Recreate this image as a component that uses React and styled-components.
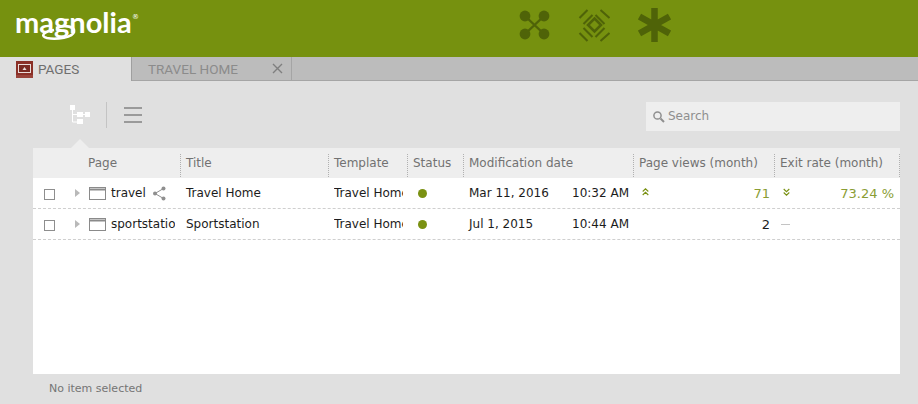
import React from 'react';
import styled, { createGlobalStyle } from 'styled-components';

const GlobalStyle = createGlobalStyle`
  html, body { margin: 0; padding: 0; height: 100%; }
  body { background: #e0e0e0; font-family: "DejaVu Sans", Verdana, sans-serif; overflow: hidden; }
`;

const COLUMNS = '148px 148px 79px 56px 170px 141px 125px';
const GREEN = '#7a9112';
const SOFT_GREEN = '#8a9d34';

const Page = styled.div`
  width: 918px;
  height: 404px;
  display: flex;
  flex-direction: column;
  background: #e0e0e0;
`;

const Header = styled.header`
  height: 57px;
  background: #76910f;
  display: flex;
  flex-shrink: 0;
`;

const Logo = styled.div`
  position: relative;
  width: 122px;
  height: 30px;
  margin: 7px 0 0 15px;
  flex-shrink: 0;
`;

const LogoText = styled.span`
  display: block;
  font-family: "Lato", sans-serif;
  font-weight: 700;
  font-size: 29px;
  line-height: 30px;
  color: #fff;
`;

const LogoSwoosh = styled.svg`
  position: absolute;
  left: 24px;
  top: 16px;
`;

const Mark = styled.span`
  position: absolute;
  left: 117px;
  top: 6px;
  font-size: 7px;
  line-height: 8px;
  color: #fff;
`;

const AppIcons = styled.nav`
  display: flex;
  align-items: center;
  margin-left: 381px;
  gap: 27px;
  height: 50px;
`;

const TabBar = styled.div`
  height: 24px;
  display: flex;
  background: #bcbcbc;
  flex-shrink: 0;
`;

const ActiveTab = styled.div`
  width: 132px;
  background: #e0e0e0;
  display: flex;
  align-items: center;
  padding-left: 16px;
  box-sizing: border-box;
  gap: 5px;
  border-right: 1px solid #9f9f9f;
  font-family: "Roboto", sans-serif;
  font-size: 13.5px;
  color: #6f6f6f;
`;

const Tab = styled.div`
  width: 160px;
  box-sizing: border-box;
  display: flex;
  align-items: center;
  justify-content: space-between;
  padding: 0 8px 0 16px;
  border-right: 1px solid #a5a5a5;
  border-bottom: 1px solid #a5a5a5;
  font-family: "Roboto", sans-serif;
  font-size: 13.5px;
  color: #8b8b8b;
`;

const TabRest = styled.div`
  flex: 1;
  border-bottom: 1px solid #a5a5a5;
`;

const Toolbar = styled.div`
  height: 67px;
  box-sizing: border-box;
  display: flex;
  align-items: flex-start;
  padding: 21px 18px 0 33px;
  flex-shrink: 0;
`;

const ViewSwitch = styled.div`
  position: relative;
  display: flex;
  align-items: center;
  height: 26px;
  padding-left: 37px;
`;

const Divider = styled.span`
  width: 1px;
  height: 26px;
  background: #c4c4c4;
  margin: 0 17px 0 15px;
`;

const Pointer = styled.span`
  position: absolute;
  left: 38px;
  top: 37px;
  border-left: 9px solid transparent;
  border-right: 9px solid transparent;
  border-bottom: 9px solid #eeeeee;
`;

const Search = styled.div`
  margin-left: auto;
  width: 254px;
  height: 29px;
  background: #eeeeee;
  display: flex;
  align-items: center;
  padding: 0 0 1px 5px;
  box-sizing: border-box;
  gap: 1px;
  font-size: 12px;
  color: #8f8f8f;
`;

const Table = styled.div`
  margin: 0 18px 0 33px;
  height: 226px;
  background: #fff;
  flex-shrink: 0;
`;

const HeaderRow = styled.div`
  display: grid;
  grid-template-columns: ${COLUMNS};
  height: 30px;
  background: #eeeeee;
`;

const HeaderCell = styled.div`
  box-sizing: border-box;
  padding-left: ${({ $pad }) => $pad}px;
  margin-top: 6px;
  height: 23px;
  line-height: 18px;
  font-size: 12px;
  color: #727272;
  white-space: nowrap;
  border-right: 1px dotted #b0b0b0;
`;

const Row = styled.div`
  display: grid;
  grid-template-columns: ${COLUMNS};
  height: 31px;
  box-sizing: border-box;
  border-bottom: 1px dashed #cfcfcf;
  font-size: 12px;
  color: #1c1c1c;
`;

const Cell = styled.div`
  display: flex;
  align-items: center;
  box-sizing: border-box;
  padding: 0 ${({ $right }) => $right ?? 0}px 0 5px;
  overflow: hidden;
  white-space: nowrap;
  min-width: 0;
`;

const PageCell = styled.div`
  display: flex;
  align-items: center;
  box-sizing: border-box;
  padding-left: 11px;
  width: 142px;
  overflow: hidden;
  white-space: nowrap;
`;

const Checkbox = styled.span`
  width: 9px;
  height: 9px;
  flex-shrink: 0;
  border: 1px solid #8e8e8e;
  margin: 2px 20px 0 0;
`;

const Caret = styled.span`
  flex-shrink: 0;
  border-left: 5px solid #b9b9b9;
  border-top: 4px solid transparent;
  border-bottom: 4px solid transparent;
  margin-right: 9px;
`;

const PageName = styled.span`
  margin-left: 5px;
`;

const ShareIcon = styled.svg`
  margin-left: 6px;
  flex-shrink: 0;
`;

const Clipped = styled.span`
  display: block;
  width: ${({ $width }) => $width}px;
  overflow: hidden;
`;

const StatusDot = styled.span`
  width: 9px;
  height: 9px;
  border-radius: 50%;
  background: ${GREEN};
  margin-left: 5px;
`;

const DateText = styled.span`
  flex: 1;
`;

const Metric = styled.div`
  display: flex;
  align-items: center;
  justify-content: space-between;
  padding: 0 ${({ $right }) => $right}px 0 ${({ $left }) => $left}px;
  font-size: 13px;
  color: ${({ $up }) => ($up ? SOFT_GREEN : '#1c1c1c')};
`;

const Trend = styled.svg`
  margin-top: -3px;
`;

const Dash = styled.span`
  width: 9px;
  height: 1px;
  background: #c4c4c4;
`;

const StatusBar = styled.div`
  padding: 8px 0 0 49px;
  font-size: 11px;
  line-height: 14px;
  color: #757575;
`;

const NetworkIcon = () => (
  <svg width="33" height="32" viewBox="0 0 33 32" fill="#4f6308" stroke="#4f6308">
    <path d="M7 7 26 25M26 7 7 25" strokeWidth="2.4" fill="none" />
    <circle cx="7" cy="7" r="5.4" stroke="none" />
    <circle cx="26" cy="7" r="5.4" stroke="none" />
    <circle cx="7" cy="25" r="5.4" stroke="none" />
    <circle cx="26" cy="25" r="5.4" stroke="none" />
  </svg>
);

const DiamondIcon = () => (
  <svg width="33" height="34" viewBox="0 0 33 34" fill="none" stroke="#4f6308" strokeWidth="2.1">
    <path d="M16.5 10.5 23 17 16.5 23.5 10 17Z" strokeWidth="2.6" />
    <path d="M1.5 10 9.5 2M5.5 16 14.5 7M17.5 7 26.5 16M22.5 2 31.5 10M5.5 20 14.5 29M1.5 25 9.5 33M17.5 29 26.5 20M22.5 33 31.5 25" />
  </svg>
);

const AsteriskIcon = () => (
  <svg width="33" height="34" viewBox="0 0 33 34" fill="none" stroke="#4f6308" strokeWidth="6.5">
    <path d="M16.5 0V34M1.5 8.5 31.5 25.5M31.5 8.5 1.5 25.5" />
  </svg>
);

const PagesAppIcon = () => (
  <svg width="17" height="17" viewBox="0 0 17 17">
    <rect width="17" height="17" fill="#8b3027" />
    <rect x="2.5" y="3.5" width="12" height="8" fill="#7a2a22" stroke="#eadcd9" />
    <path d="M8.5 6 10.5 9H6.5Z" fill="#eadcd9" />
    <rect y="14" width="17" height="3" fill="#9a443b" />
  </svg>
);

const CloseIcon = () => (
  <svg width="11" height="11" viewBox="0 0 11 11" stroke="#7f7f7f" strokeWidth="1.4">
    <path d="M1 1 10 10M10 1 1 10" />
  </svg>
);

const TreeIcon = () => (
  <svg width="21" height="21" viewBox="0 0 21 21" fill="#fff">
    <path d="M2.5 4V17H9M2.5 9.5H18" stroke="#fff" fill="none" />
    <rect x="0" y="0" width="5" height="5" />
    <rect x="7" y="7" width="6" height="5" />
    <rect x="15" y="7" width="5" height="5" />
    <rect x="7" y="14" width="6" height="5" />
  </svg>
);

const ListIcon = () => (
  <svg width="18" height="17" viewBox="0 0 18 17" fill="#9a9a9a">
    <rect y="0" width="18" height="2" />
    <rect y="7" width="18" height="2" />
    <rect y="14" width="18" height="2" />
  </svg>
);

const SearchIcon = () => (
  <svg width="16" height="16" viewBox="0 0 16 16" fill="none" stroke="#8f8f8f">
    <circle cx="6.5" cy="7.5" r="3.6" strokeWidth="1.5" />
    <path d="M9.5 10.5 13 14" strokeWidth="2" />
  </svg>
);

const PageIcon = () => (
  <svg width="17" height="13" viewBox="0 0 17 13" fill="none" stroke="#8a8a8a" style={{ flexShrink: 0 }}>
    <rect x="0.5" y="0.5" width="16" height="12" />
    <path d="M1 2.5H16" strokeWidth="2" />
  </svg>
);

const Chevrons = ({ up }) => (
  <Trend width="7" height="8" viewBox="0 0 7 8" fill="none" stroke={GREEN} strokeWidth="1.1">
    <path d={up ? 'M.7 3.5 3.5 .8 6.3 3.5M.7 7 3.5 4.3 6.3 7' : 'M.7 1 3.5 3.7 6.3 1M.7 4.5 3.5 7.2 6.3 4.5'} />
  </Trend>
);

const columns = [
  { label: 'Page', pad: 55 },
  { label: 'Title', pad: 5 },
  { label: 'Template', pad: 5 },
  { label: 'Status', pad: 5 },
  { label: 'Modification date', pad: 5 },
  { label: 'Page views (month)', pad: 5 },
  { label: 'Exit rate (month)', pad: 5 },
];

const rows = [
  {
    name: 'travel',
    shared: true,
    title: 'Travel Home',
    date: 'Mar 11, 2016',
    time: '10:32 AM',
    views: '71',
    rate: '73.24 %',
    trending: true,
  },
  {
    name: 'sportstation',
    title: 'Sportstation',
    date: 'Jul 1, 2015',
    time: '10:44 AM',
    views: '2',
  },
];

export default function App() {
  return (
    <Page>
      <GlobalStyle />
      <Header>
        <Logo>
          <LogoText>magnolia</LogoText>
          <LogoSwoosh width="44" height="18" viewBox="0 0 44 18" fill="none" stroke="#fff">
            <path d="M17 5C27 1 36 4 35 9 34 14 18 17 8 15 1 13 4 9 15 7" strokeWidth="2.6" />
          </LogoSwoosh>
          <Mark>®</Mark>
        </Logo>
        <AppIcons>
          <NetworkIcon />
          <DiamondIcon />
          <AsteriskIcon />
        </AppIcons>
      </Header>
      <TabBar>
        <ActiveTab>
          <PagesAppIcon />
          PAGES
        </ActiveTab>
        <Tab>
          TRAVEL HOME
          <CloseIcon />
        </Tab>
        <TabRest />
      </TabBar>
      <Toolbar>
        <ViewSwitch>
          <TreeIcon />
          <Divider />
          <ListIcon />
          <Pointer />
        </ViewSwitch>
        <Search>
          <SearchIcon />
          Search
        </Search>
      </Toolbar>
      <Table>
        <HeaderRow>
          {columns.map((col) => (
            <HeaderCell key={col.label} $pad={col.pad}>{col.label}</HeaderCell>
          ))}
        </HeaderRow>
        {rows.map((row) => (
          <Row key={row.name}>
            <PageCell>
              <Checkbox />
              <Caret />
              <PageIcon />
              <PageName>{row.name}</PageName>
              {row.shared && (
                <ShareIcon width="15" height="15" viewBox="0 0 15 15" fill="#8f8f8f" stroke="#8f8f8f">
                  <path d="M11.5 2.5 3 7.5 11.5 12.5" fill="none" />
                  <circle cx="3" cy="7.5" r="2" stroke="none" />
                  <circle cx="11.5" cy="2.5" r="2" stroke="none" />
                  <circle cx="11.5" cy="12.5" r="2" stroke="none" />
                </ShareIcon>
              )}
            </PageCell>
            <Cell>{row.title}</Cell>
            <Cell>
              <Clipped $width={69}>Travel Home</Clipped>
            </Cell>
            <Cell>
              <StatusDot />
            </Cell>
            <Cell $right={5}>
              <DateText>{row.date}</DateText>
              {row.time}
            </Cell>
            <Metric $up={row.trending} $left={8} $right={5}>
              {row.trending ? <Chevrons up /> : <span />}
              {row.views}
            </Metric>
            <Metric $up={row.trending} $left={row.trending ? 8 : 6} $right={6}>
              {row.trending ? <Chevrons /> : <Dash />}
              {row.rate}
            </Metric>
          </Row>
        ))}
      </Table>
      <StatusBar>No item selected</StatusBar>
    </Page>
  );
}
